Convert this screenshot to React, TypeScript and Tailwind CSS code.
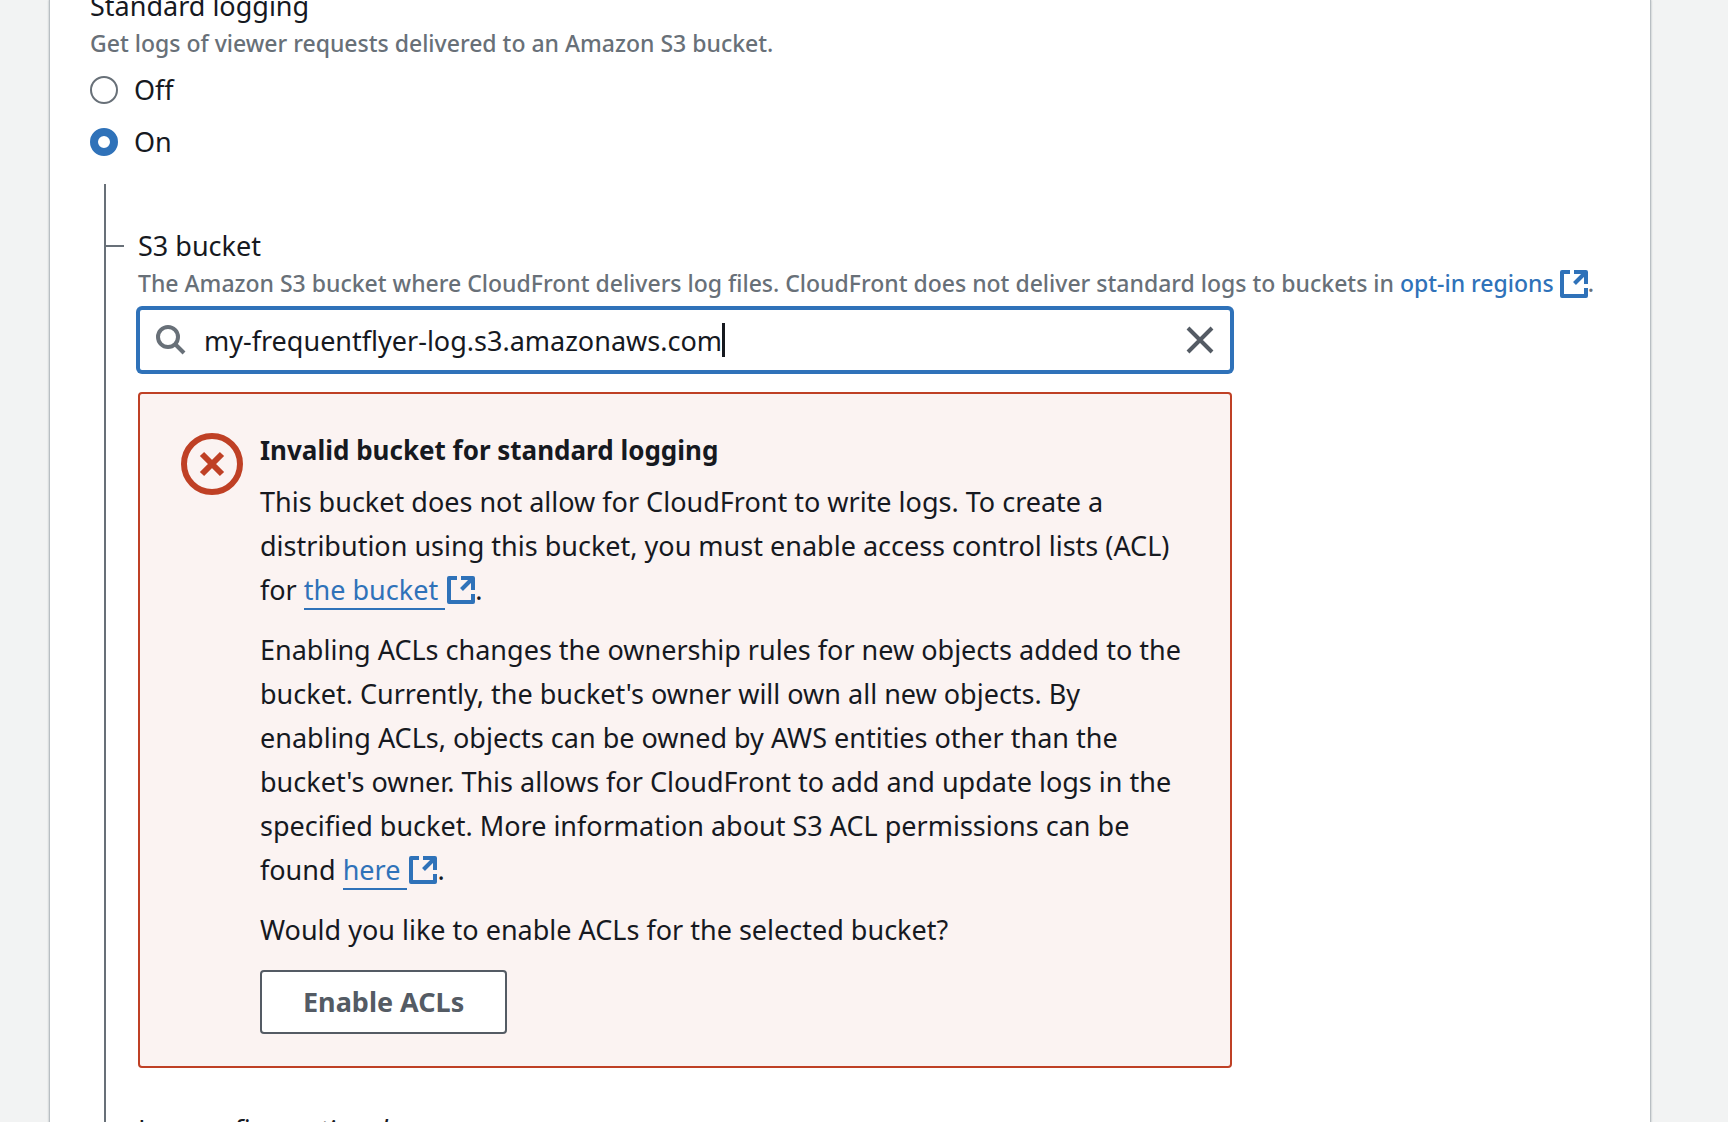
import { useState } from "react";
import type { ReactNode } from "react";

function ExternalIcon({ className }: { className: string }) {
  return (
    <svg
      viewBox="0 0 28 28"
      className={"inline-block h-7 w-7 " + className}
      fill="none"
      stroke="currentColor"
      strokeWidth="4"
      aria-hidden="true"
    >
      <path d="M10 2H2v24h24v-8" strokeLinejoin="round" />
      <path d="M14 2h12v12" strokeLinejoin="round" />
      <path d="M25 3 14.5 13.5" />
    </svg>
  );
}

function SearchIcon() {
  return (
    <svg
      viewBox="0 0 30 30"
      className="h-[30px] w-[30px] shrink-0 text-[#687078]"
      fill="none"
      stroke="currentColor"
      strokeWidth="4"
      aria-hidden="true"
    >
      <circle cx="12" cy="12" r="10" />
      <path d="m19 19 9 9" />
    </svg>
  );
}

function CloseIcon() {
  return (
    <svg
      viewBox="0 0 28 28"
      className="h-7 w-7"
      fill="none"
      stroke="currentColor"
      strokeWidth="4"
      aria-hidden="true"
    >
      <path d="m2 2 24 24M26 2 2 26" />
    </svg>
  );
}

function ErrorIcon() {
  return (
    <svg
      viewBox="0 0 62 62"
      className="mt-[5px] h-[62px] w-[62px] shrink-0 text-[#bf4025]"
      fill="none"
      stroke="currentColor"
      strokeWidth="6"
      aria-hidden="true"
    >
      <circle cx="31" cy="31" r="28" />
      <path d="m21 21 20 20M41 21 21 41" />
    </svg>
  );
}

function InlineLink({ children }: { children: ReactNode }) {
  return (
    <a href="#bucket" className="whitespace-nowrap text-[#2f72b9]">
      <span className="mr-[2px] border-b-2 border-[#2f72b9]">{children}&nbsp;</span>
      <ExternalIcon className="align-[-4px]" />
    </a>
  );
}

function LoggingOption({
  label,
  checked,
  onSelect,
}: {
  label: string;
  checked: boolean;
  onSelect: () => void;
}) {
  return (
    <label className="flex items-center gap-4 leading-[44px]">
      <input
        type="radio"
        name="standard-logging"
        checked={checked}
        onChange={onSelect}
        className="h-7 w-7 shrink-0 appearance-none rounded-full border-2 border-[#687078] bg-white checked:border-8 checked:border-[#2f72b9]"
      />
      {label}
    </label>
  );
}

export default function App() {
  const [logging, setLogging] = useState("on");
  const [bucket, setBucket] = useState("my-frequentflyer-log.s3.amazonaws.com");

  return (
    <div className="h-screen overflow-hidden bg-[#f2f3f3] pr-[77px] pl-[49px] font-['Noto_Sans',sans-serif] text-[27px] text-[#16191f]">
      <main className="flex min-h-full flex-col border-x border-[#b9bfc3] bg-white pr-10 pl-10 shadow-[0_0_2px_rgba(0,28,36,0.3)]">
        <fieldset className="-mt-[14px]">
          <legend className="leading-10">Standard logging</legend>
          <p className="text-[23px] leading-[34px] font-medium text-[#687078]">
            Get logs of viewer requests delivered to an Amazon S3 bucket.
          </p>
          <div className="mt-2 flex flex-col gap-2">
            <LoggingOption label="Off" checked={logging === "off"} onSelect={() => setLogging("off")} />
            <LoggingOption label="On" checked={logging === "on"} onSelect={() => setLogging("on")} />
          </div>
        </fieldset>

        <div className="mt-5 ml-[14px] grow border-l-2 border-[#687078] pt-[42px]">
          <div className="flex items-center gap-[14px] leading-10">
            <span className="h-[2px] w-[18px] bg-[#687078]" />
            <label htmlFor="bucket">S3 bucket</label>
          </div>

          <div className="pl-8">
            <p className="text-[23px] leading-[34px] font-medium whitespace-nowrap text-[#687078]">
              The Amazon S3 bucket where CloudFront delivers log files. CloudFront does not deliver
              standard logs to buckets in{" "}
              <a href="#regions" className="text-[#2f72b9]">
                opt-in regions <ExternalIcon className="align-[-6px]" />
              </a>
              .
            </p>

            <div className="mt-2 flex h-16 max-w-[1094px] items-center rounded-[4px] border-2 border-[#2f72b9] bg-white px-4 ring-2 ring-[#2f72b9]">
              <SearchIcon />
              <input
                id="bucket"
                type="text"
                value={bucket}
                onChange={(e) => setBucket(e.target.value)}
                className="ml-[18px] h-11 [field-sizing:content] outline-none"
              />
              <span className="h-[34px] w-[3px] bg-[#16191f]" />
              <button
                type="button"
                aria-label="Clear bucket"
                onClick={() => setBucket("")}
                className="ml-auto text-[#545b64]"
              >
                <CloseIcon />
              </button>
            </div>

            <section
              role="alert"
              className="mt-5 flex max-w-[1094px] gap-[17px] rounded-[4px] border-2 border-[#bf4025] bg-[#fbf3f2] px-[41px] pt-[34px] pb-8 leading-[44px]"
            >
              <ErrorIcon />
              <div className="min-w-0">
                <h2 className="text-[26px] font-bold">Invalid bucket for standard logging</h2>
                <div className="mt-2 flex flex-col gap-4">
                  <p>
                    This bucket does not allow for CloudFront to write logs. To create a
                    distribution using this bucket, you must enable access control lists (ACL) for{" "}
                    <InlineLink>the bucket</InlineLink>.
                  </p>
                  <p>
                    Enabling ACLs changes the ownership rules for new objects added to the bucket.
                    Currently, the bucket's owner will own all new objects. By enabling ACLs,
                    objects can be owned by AWS entities other than the bucket's owner. This allows
                    for CloudFront to add and update logs in the specified bucket. More information
                    about S3 ACL permissions can be found <InlineLink>here</InlineLink>.
                  </p>
                  <p>Would you like to enable ACLs for the selected bucket?</p>
                </div>
                <button
                  type="button"
                  className="mt-[18px] block h-16 rounded-[4px] border-2 border-[#545b64] bg-white px-[41px] font-bold text-[#545b64]"
                >
                  Enable ACLs
                </button>
              </div>
            </section>

            <label htmlFor="prefix" className="mt-[42px] block leading-10">
              Log prefix - <i>optional</i>
            </label>
            <input
              id="prefix"
              type="text"
              className="mt-2 h-16 w-full max-w-[1094px] rounded-[4px] border-2 border-[#687078] px-4"
            />
          </div>
        </div>
      </main>
    </div>
  );
}
